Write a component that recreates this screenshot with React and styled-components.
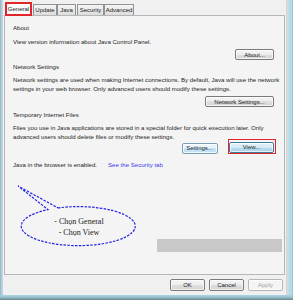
import React from "react";
import styled, { createGlobalStyle } from "styled-components";

const GlobalStyle = createGlobalStyle`
  html, body {
    margin: 0;
    padding: 0;
    background: #ffffff;
  }
  body {
    font-family: "Liberation Sans", Arial, sans-serif;
  }
`;

const Window = styled.div`
  position: relative;
  width: 293px;
  height: 300px;
  display: grid;
  grid-template-columns: 3px 284px 6px;
  grid-template-rows: 295px 5px;
  overflow: hidden;
`;

const LeftFrame = styled.div`
  background: linear-gradient(to right, #8fb3c4, #b9d2de 60%, #c9d6dc);
`;

const RightFrame = styled.div`
  background: linear-gradient(to right, #d4dde1, #b8dce7 35%, #b3d9e5 80%, #8fb6c4);
`;

const BottomFrame = styled.div`
  grid-column: 1 / -1;
  background: linear-gradient(to bottom, #a9d4e1, #9cc4d1 40%, #6a8690);
`;

const Dialog = styled.div`
  background: #f0f0f0;
  display: flex;
  flex-direction: column;
  border-right: 1px solid #d6d6d6;
`;

const TabStrip = styled.div`
  height: 15px;
  display: flex;
  align-items: flex-end;
  padding-left: 2px;
`;

const Tab = styled.div`
  box-sizing: border-box;
  width: ${(p) => p.w}px;
  height: ${(p) => (p.selected ? 14 : 11)}px;
  margin-bottom: ${(p) => (p.selected ? -1 : 0)}px;
  margin-left: ${(p) => p.ml || 0}px;
  border: ${(p) => (p.selected ? "2px solid #e0262b" : "1px solid #8f9396")};
  border-bottom: ${(p) => (p.selected ? "2px solid #e0262b" : "none")};
  background: ${(p) =>
    p.selected
      ? "#fbfbfb"
      : "linear-gradient(to bottom, #f6f6f6, #e9e9e9 50%, #dcdcdc)"};
  display: flex;
  align-items: center;
  justify-content: center;
  font-size: 6px;
  color: #1a1a1a;
  position: relative;
  z-index: ${(p) => (p.selected ? 2 : 1)};
  white-space: nowrap;
`;

const Panel = styled.div`
  box-sizing: border-box;
  margin-left: 1px;
  width: 281px;
  height: 260px;
  border: 1px solid #b4b6b8;
  background: #f4f4f4;
  padding: 7px 10px 22px 8px;
  display: flex;
  flex-direction: column;
`;

const Heading = styled.div`
  font-size: 6.1px;
  line-height: 9px;
  color: #1e1e1e;
  margin-top: ${(p) => p.mt || 0}px;
`;

const Text = styled.div`
  font-size: 6.1px;
  line-height: 9px;
  color: #1e1e1e;
  margin-top: ${(p) => p.mt || 0}px;
  white-space: nowrap;
`;

const ButtonRow = styled.div`
  display: flex;
  justify-content: flex-end;
  align-items: center;
  gap: ${(p) => p.gap || 0}px;
  margin-top: ${(p) => p.mt || 0}px;
  margin-right: ${(p) => p.mr || 0}px;
`;

const Button = styled.div`
  box-sizing: border-box;
  width: ${(p) => p.w}px;
  height: ${(p) => p.h || 11}px;
  border: 1px solid ${(p) =>
    p.variant === "focus" ? "#3d7a92" : p.variant === "hover" ? "#7d9fb5" : p.disabled ? "#b5b5b5" : "#7a7a7a"};
  border-radius: 2px;
  background: ${(p) =>
    p.variant === "focus"
      ? "linear-gradient(to bottom, #e4f2f9, #d2eaf6 50%, #b8dcef 50%, #a9d3ea)"
      : p.variant === "hover"
      ? "linear-gradient(to bottom, #eef7fc, #e0f0fa 50%, #cbe6f7 50%, #bcdff4)"
      : p.disabled
      ? "#f4f4f4"
      : "linear-gradient(to bottom, #f5f5f5, #ececec 50%, #dfdfdf 50%, #d3d3d3)"};
  box-shadow: inset 0 0 0 1px rgba(255, 255, 255, 0.7);
  display: flex;
  align-items: center;
  justify-content: center;
  font-size: 6px;
  color: ${(p) => (p.disabled ? "#a3a3a3" : "#1a1a1a")};
  white-space: nowrap;
`;

const FocusBox = styled.div`
  border: 1.5px solid #e0262b;
  padding: 1.5px 1px 0.5px 0.5px;
  margin-top: -3px;
  display: flex;
`;

const StatusLine = styled.div`
  display: flex;
  align-items: center;
  margin-top: 6px;
  font-size: 6.1px;
  line-height: 9px;
  color: #1e1e1e;
`;

const Link = styled.span`
  color: #3a3aee;
  margin-left: 11px;
`;

const Blank = styled.div`
  margin-top: auto;
  align-self: flex-end;
  margin-right: -8px;
  width: 125px;
  height: 13px;
  background: #c8c8c8;
`;

const Footer = styled.div`
  flex: 1;
  display: flex;
  justify-content: flex-end;
  align-items: center;
  gap: 4px;
  padding: 0 3px 1px 0;
`;

const Callout = styled.div`
  position: absolute;
  left: 0;
  top: 0;
  width: 293px;
  height: 300px;
  pointer-events: none;
`;

const CalloutText = styled.div`
  position: absolute;
  left: 22px;
  top: 216px;
  width: 114px;
  text-align: center;
  font-family: "Liberation Serif", "Times New Roman", serif;
  font-size: 8px;
  line-height: 11px;
  color: #1a1a1a;
`;

const tabs = [
  { label: "General", w: 27, selected: true },
  { label: "Update", w: 24, ml: 1 },
  { label: "Java", w: 19 },
  { label: "Security", w: 27, ml: 1 },
  { label: "Advanced", w: 30 },
];

export default function App() {
  return (
    <>
      <GlobalStyle />
      <Window>
        <LeftFrame />
        <Dialog>
          <TabStrip>
            {tabs.map((t) => (
              <Tab key={t.label} w={t.w} ml={t.ml} selected={t.selected}>
                {t.label}
              </Tab>
            ))}
          </TabStrip>
          <Panel>
            <Heading>About</Heading>
            <Text mt={5}>View version information about Java Control Panel.</Text>
            <ButtonRow mt={3}>
              <Button w={39}>About...</Button>
            </ButtonRow>

            <Heading mt={2}>Network Settings</Heading>
            <Text mt={4}>
              Network settings are used when making Internet connections. By default, Java will use the network
              <br />
              settings in your web browser. Only advanced users should modify these settings.
            </Text>
            <ButtonRow mt={3}>
              <Button w={69}>Network Settings...</Button>
            </ButtonRow>

            <Heading mt={3}>Temporary Internet Files</Heading>
            <Text mt={4}>
              Files you use in Java applications are stored in a special folder for quick execution later. Only
              <br />
              advanced users should delete files or modify these settings.
            </Text>
            <ButtonRow mt={1} gap={10} mr={-2}>
              <Button w={36} variant="hover">Settings...</Button>
              <FocusBox>
                <Button w={45} variant="focus">View...</Button>
              </FocusBox>
            </ButtonRow>

            <StatusLine>
              Java in the browser is enabled.
              <Link>See the Security tab</Link>
            </StatusLine>

            <Blank />
          </Panel>
          <Footer>
            <Button w={35} h={12}>OK</Button>
            <Button w={35} h={12}>Cancel</Button>
            <Button w={35} h={12} disabled>Apply</Button>
          </Footer>
        </Dialog>
        <RightFrame />
        <BottomFrame />

        <Callout>
          <svg width="293" height="300" viewBox="0 0 293 300">
            <path
              d="M 58 207.9 A 57 19.5 0 1 1 48 209.6 L 18 186 Z"
              fill="none"
              stroke="#2323e6"
              strokeWidth="1.2"
              strokeDasharray="2.5 1.3"
            />
          </svg>
          <CalloutText>
            - Chọn General
            <br />
            - Chọn View
          </CalloutText>
        </Callout>
      </Window>
    </>
  );
}
